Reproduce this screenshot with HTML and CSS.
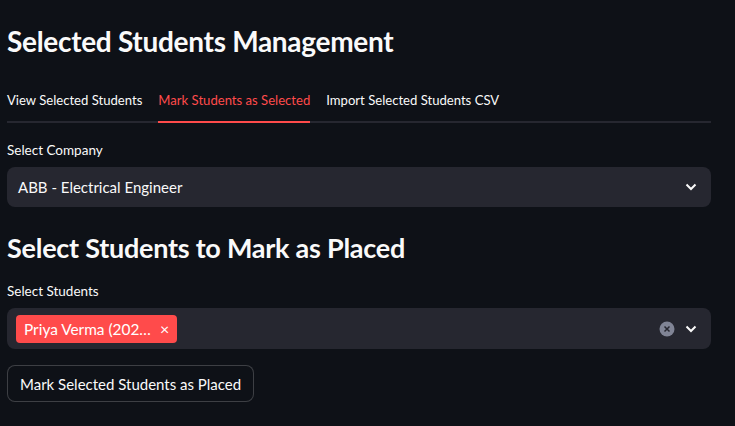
FILE: index.html
```html
<!DOCTYPE html>
<html>
<head>
<meta charset="utf-8">
<link rel="stylesheet" href="styles.css">
</head>
<body>
<main class="page">
  <h1 class="title">Selected Students Management</h1>
  <div class="tabs">
    <div class="tab">View Selected Students</div>
    <div class="tab active">Mark Students as Selected</div>
    <div class="tab">Import Selected Students CSV</div>
  </div>
  <div class="field first">
    <label class="label">Select Company</label>
    <div class="select">
      <span class="value">ABB - Electrical Engineer</span>
      <svg class="chev" width="12" height="8" viewBox="0 0 12 8"><path d="M1.5 1.5 L6 6 L10.5 1.5" fill="none" stroke="#fafafa" stroke-width="2"/></svg>
    </div>
  </div>
  <h2 class="subtitle">Select Students to Mark as Placed</h2>
  <div class="field">
    <label class="label">Select Students</label>
    <div class="select multi">
      <span class="tag">Priya Verma (202… <span class="tag-x">×</span></span>
      <span class="spacer"></span>
      <svg class="clear" width="16" height="16" viewBox="0 0 16 16"><circle cx="8" cy="8" r="7.5" fill="#808495"/><path d="M5.5 5.5 L10.5 10.5 M10.5 5.5 L5.5 10.5" stroke="#262730" stroke-width="1.5"/></svg>
      <svg class="chev" width="12" height="8" viewBox="0 0 12 8"><path d="M1.5 1.5 L6 6 L10.5 1.5" fill="none" stroke="#fafafa" stroke-width="2"/></svg>
    </div>
  </div>
  <button class="btn">Mark Selected Students as Placed</button>
</main>
</body>
</html>
```
FILE: styles.css
```css
html, body {
  margin: 0;
  padding: 0;
  background: #0e1117;
  color: #fafafa;
  font-family: "Lato", "Noto Sans", sans-serif;
}
.page {
  width: 704px;
  padding: 0 0 0 7px;
}
.title {
  margin: 0;
  padding-top: 26px;
  font-size: 28px;
  font-weight: 700;
  line-height: 30px;
  letter-spacing: -0.3px;
}
.tabs {
  margin-top: 35px;
  display: flex;
  gap: 16px;
  border-bottom: 2px solid #262730;
}
.tab {
  font-size: 13.1px;
  padding-bottom: 12px;
  margin-bottom: -2px;
  border-bottom: 2px solid transparent;
  line-height: 18px;
}
.tab.active {
  color: #ff4b4b;
  border-bottom-color: #ff4b4b;
}
.field.first {
  margin-top: 18px;
}
.label {
  display: block;
  font-size: 13.5px;
  line-height: 18px;
  margin-bottom: 8px;
}
.select {
  height: 40px;
  background: #262730;
  border-radius: 8px;
  display: flex;
  align-items: center;
  padding: 0 14px 0 11px;
  font-size: 15px;
}
.select .value {
  flex: 1;
}
.multi {
  height: 41px;
  padding-left: 9px;
  gap: 0;
}
.spacer { flex: 1; }
.clear { margin-right: 10px; }
.tag {
  background: #ff4b4b;
  color: #fff;
  height: 28px;
  border-radius: 4px;
  display: flex;
  align-items: center;
  padding: 0 8px;
  font-size: 15.4px;
}
.tag-x {
  margin-left: 9px;
  font-size: 16px;
}
.subtitle {
  margin: 0;
  margin-top: 26px;
  font-size: 27px;
  font-weight: 700;
  line-height: 30px;
  letter-spacing: -0.25px;
}
.subtitle + .field {
  margin-top: 19px;
}
.btn {
  margin-top: 16px;
  height: 37px;
  padding: 0 12px;
  background: #0e1117;
  border: 1px solid rgba(250,250,250,0.2);
  border-radius: 8px;
  color: #fafafa;
  font-family: inherit;
  font-size: 15px;
}
```
